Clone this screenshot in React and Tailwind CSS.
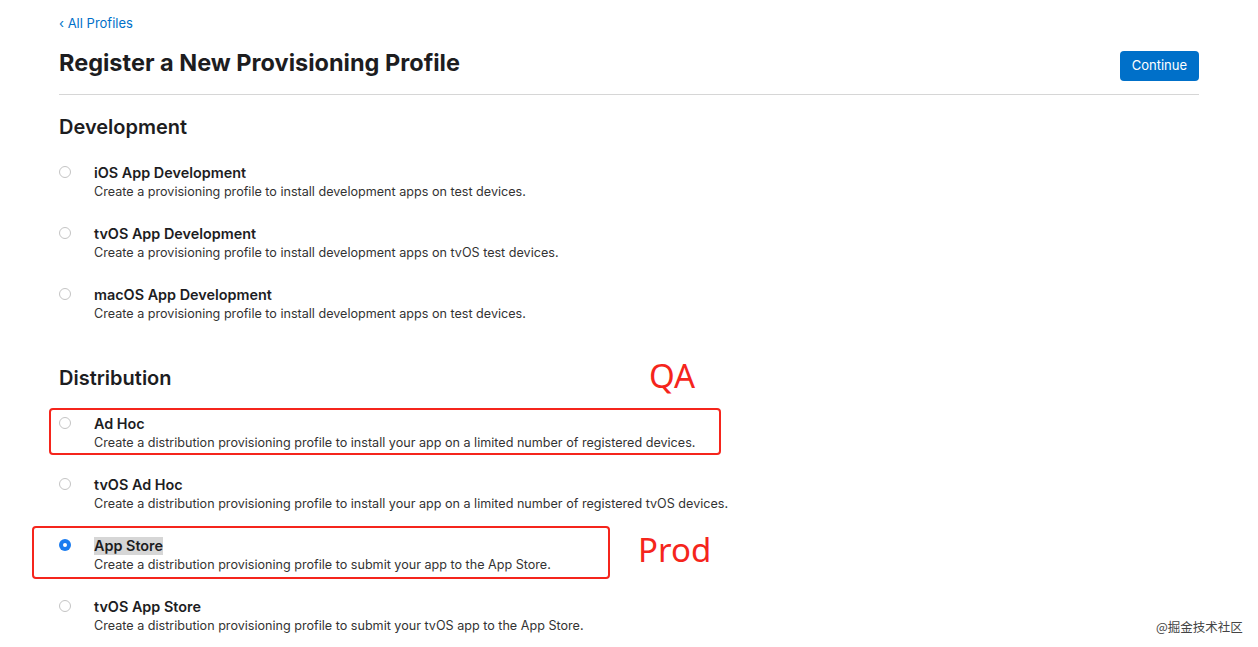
import React from "react";

const font = { fontFamily: "Inter, 'Noto Sans', sans-serif" };

function Radio({ checked }) {
  if (checked)
    return (
      <span className="mt-[2px] flex h-[12px] w-[12px] shrink-0 items-center justify-center rounded-full bg-[#1a7cf0]">
        <span className="h-[4px] w-[4px] rounded-full bg-white" />
      </span>
    );
  return <span className="mt-[2px] h-[12px] w-[12px] shrink-0 rounded-full border border-[#c4c4c4] bg-white" />;
}

function Option({ title, desc, checked, highlight }) {
  return (
    <div className="flex h-[61px] items-start">
      <div className="flex w-[35px] justify-start">
        <Radio checked={checked} />
      </div>
      <div className="flex flex-col">
        <div className="flex">
          <span className={`text-[14.4px] font-semibold leading-[18px] text-[#1d1d1f] ${highlight ? "bg-[#d6d6d6]" : ""}`}>{title}</span>
        </div>
        <span className="mt-[2px] text-[12.6px] leading-[16px] text-[#333]">{desc}</span>
      </div>
    </div>
  );
}

export default function App() {
  return (
    <div className="relative h-[647px] w-[1258px] overflow-hidden bg-white" style={font}>
      <div className="ml-[59px] w-[1140px] pt-[14px]">
        <a className="block text-[13px] leading-[18px] text-[#0070c9]">‹ All Profiles</a>
        <div className="mt-[18px] flex items-start justify-between">
          <h1 className="text-[23.5px] font-bold leading-[26px] text-[#1d1d1f]">Register a New Provisioning Profile</h1>
          <button className="mt-[1px] h-[30px] rounded-[4px] bg-[#0070c9] px-[12px] text-[13px] text-white">Continue</button>
        </div>
        <div className="mt-[13px] h-px bg-[#d6d6d6]" />
        <h2 className="mt-[20px] text-[20px] font-semibold leading-[24px] text-[#1d1d1f]">Development</h2>
        <div className="mt-[25px]">
          <Option title="iOS App Development" desc="Create a provisioning profile to install development apps on test devices." />
          <Option title="tvOS App Development" desc="Create a provisioning profile to install development apps on tvOS test devices." />
          <Option title="macOS App Development" desc="Create a provisioning profile to install development apps on test devices." />
        </div>
        <h2 className="mt-[19px] text-[20px] font-semibold leading-[24px] text-[#1d1d1f]">Distribution</h2>
        <div className="mt-[25px]">
          <Option title="Ad Hoc" desc="Create a distribution provisioning profile to install your app on a limited number of registered devices." />
          <Option title="tvOS Ad Hoc" desc="Create a distribution provisioning profile to install your app on a limited number of registered tvOS devices." />
          <Option checked highlight title="App Store" desc="Create a distribution provisioning profile to submit your app to the App Store." />
          <Option title="tvOS App Store" desc="Create a distribution provisioning profile to submit your tvOS app to the App Store." />
        </div>
      </div>

      {/* annotations */}
      <div className="absolute left-[49px] top-[408px] h-[47px] w-[672px] rounded-[4px] border-2 border-[#f5251c]" />
      <div className="absolute left-[32px] top-[526px] h-[53px] w-[578px] rounded-[4px] border-2 border-[#f5251c]" />
      <div className="absolute left-[649px] top-[356px] text-[33px] leading-[40px] text-[#f5251c]" style={{ fontFamily: "'Noto Sans', sans-serif" }}>QA</div>
      <div className="absolute left-[638px] top-[530px] text-[33px] leading-[40px] text-[#f5251c]" style={{ fontFamily: "'Noto Sans', sans-serif" }}>Prod</div>
      <div className="absolute left-[1156px] top-[619px] text-[12.5px] leading-[16px] text-[#444]" style={{ fontFamily: "'Noto Sans CJK SC', sans-serif" }}>@掘金技术社区</div>
    </div>
  );
}
